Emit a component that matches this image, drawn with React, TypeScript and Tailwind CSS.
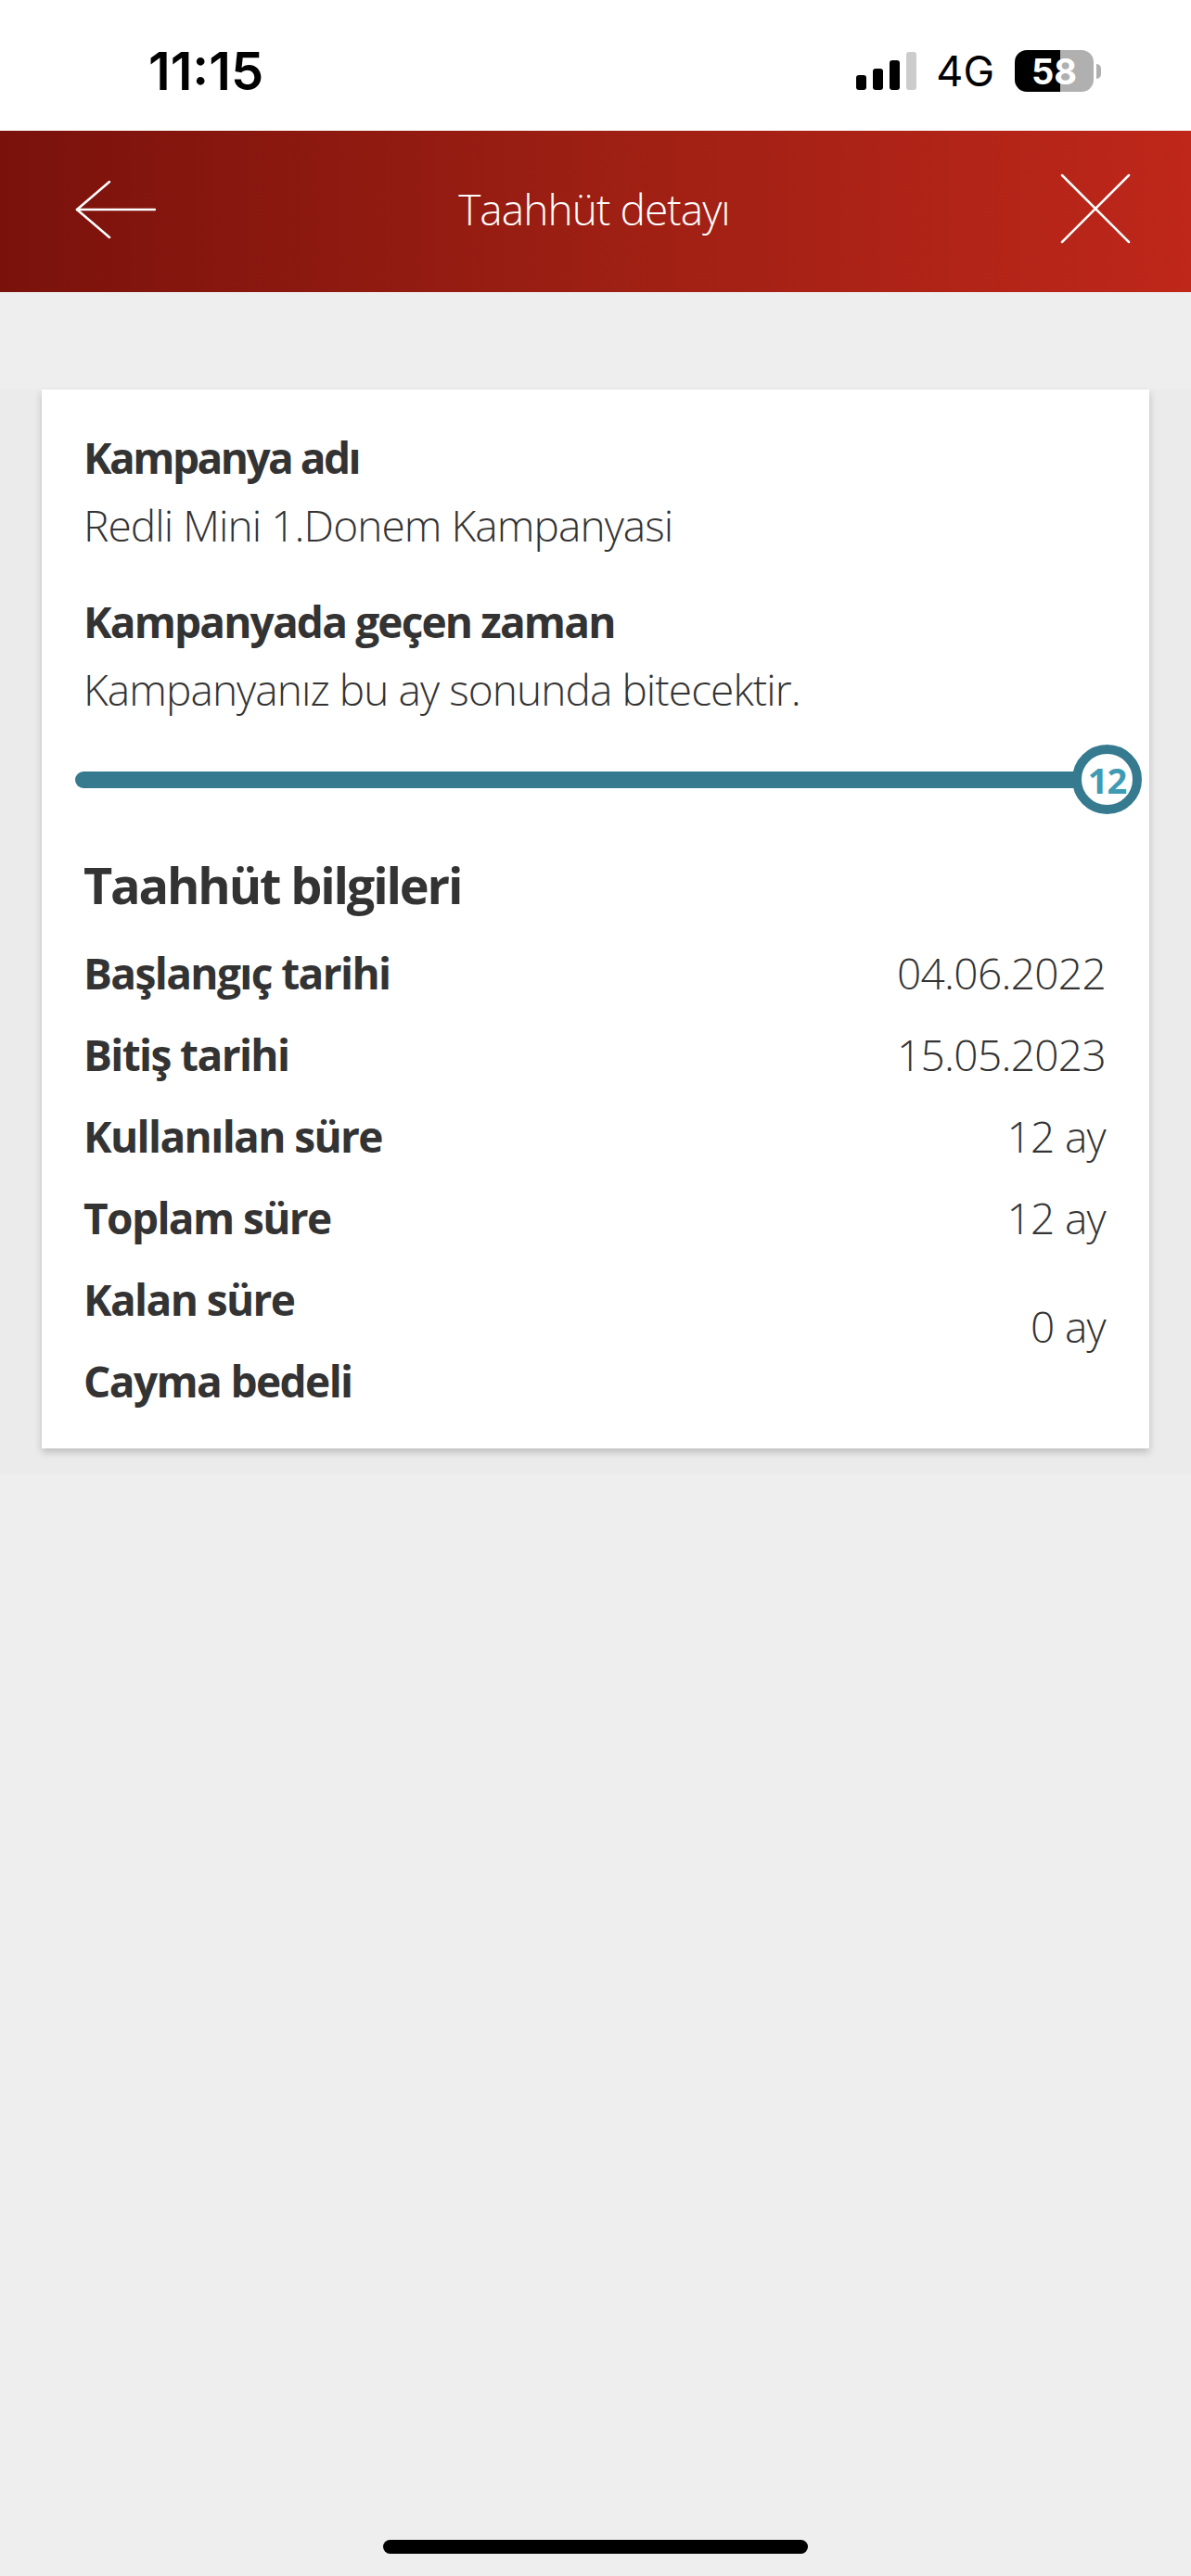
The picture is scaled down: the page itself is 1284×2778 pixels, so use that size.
const rows = [
  { label: 'Başlangıç tarihi', value: '04.06.2022' },
  { label: 'Bitiş tarihi', value: '15.05.2023' },
  { label: 'Kullanılan süre', value: '12 ay' },
  { label: 'Toplam süre', value: '12 ay' },
];

function StatusBar() {
  return (
    <div className="h-[141px] bg-white flex items-center justify-between pl-[160px] pr-[105px] pt-[12px]">
      <span className="font-['Inter',sans-serif] text-[56px] font-semibold text-black leading-none">11:15</span>
      <div className="flex items-center">
        <div className="flex items-end gap-[7px] h-[41px]">
          <span className="w-[11px] h-[16px] rounded-[3px] bg-black" />
          <span className="w-[11px] h-[23px] rounded-[3px] bg-black" />
          <span className="w-[11px] h-[32px] rounded-[3px] bg-black" />
          <span className="w-[11px] h-[41px] rounded-[3px] bg-[#cccccc]" />
        </div>
        <span className="ml-[21px] font-['Inter',sans-serif] text-[45px] font-normal text-black leading-none">4G</span>
        <div className="ml-[22px] relative w-[85px] h-[45px] rounded-[13px] bg-[linear-gradient(90deg,#000_58%,#b0b0b0_58%)] flex items-center justify-center">
          <span className="font-['Inter',sans-serif] text-[38px] font-bold text-white leading-none">58</span>
          <span className="absolute left-[88px] top-[15px] w-[5px] h-[16px] rounded-r-full bg-[#b0b0b0]" />
        </div>
      </div>
    </div>
  );
}

function Header() {
  return (
    <div className="h-[174px] bg-gradient-to-r from-[#7a120c] via-[#9d1f13] to-[#be271a] grid grid-cols-[1fr_auto_1fr] items-center pl-[80px] pr-[65px] text-white">
      <svg width="88" height="64" viewBox="0 0 88 64" fill="none" stroke="currentColor" strokeWidth="2.5" strokeLinecap="round" strokeLinejoin="round" className="mb-[4px]">
        <path d="M87 32H3" />
        <path d="M3 32 38 2" />
        <path d="M3 32 38 62" />
      </svg>
      <span className="mr-[18px] mb-[7px] font-['Open_Sans',sans-serif] text-[46px] font-light leading-none tracking-[-0.02em]">Taahhüt detayı</span>
      <svg width="76" height="76" viewBox="0 0 76 76" fill="none" stroke="currentColor" strokeWidth="2.5" strokeLinecap="round" className="justify-self-end mb-[6px]">
        <path d="M2 2 74 74" />
        <path d="M74 2 2 74" />
      </svg>
    </div>
  );
}

function Progress() {
  return (
    <div className="mt-[33px] ml-[-9px] mr-[-39px] flex items-center">
      <div className="h-[18px] flex-1 bg-[#367a90] rounded-l-full mr-[-1px]" />
      <div className="w-[75px] h-[75px] rounded-full border-[10px] border-[#367a90] bg-white flex items-center justify-center">
        <span className="font-['Open_Sans',sans-serif] text-[38px] font-bold text-[#3f9ab3] leading-none tracking-[-1px]">12</span>
      </div>
    </div>
  );
}

export default function App() {
  return (
    <div className="min-h-[2778px] flex flex-col bg-[#eeeeee] font-['Open_Sans',sans-serif] text-[#333333]">
      <StatusBar />
      <Header />
      <div className="h-[105px]" />
      <div className="bg-[#ebebeb] px-[45px] pb-[28px]">
        <div className="bg-white h-[1142px] pl-[45px] pr-[47px] pt-[46px] shadow-[0_4px_8px_rgba(0,0,0,0.2)]">
          <p className="text-[46px] font-bold tracking-[-0.055em] leading-[54px]">Kampanya adı</p>
          <p className="mt-[19px] text-[46px] font-light tracking-[-0.02em] leading-[54px]">Redli Mini 1.Donem Kampanyasi</p>
          <p className="mt-[50px] text-[46px] font-bold tracking-[-0.04em] leading-[54px]">Kampanyada geçen zaman</p>
          <p className="mt-[19px] text-[46px] font-light tracking-[-0.02em] leading-[54px]">Kampanyanız bu ay sonunda bitecektir.</p>
          <Progress />
          <p className="mt-[44px] text-[54px] font-bold tracking-[-0.04em] leading-[64px]">Taahhüt bilgileri</p>
          <div className="mt-[19px]">
            {rows.map(r => (
              <div key={r.label} className="h-[88px] flex items-center justify-between text-[46px]">
                <span className="font-bold tracking-[-0.035em]">{r.label}</span>
                <span className="font-light tracking-[-0.015em]">{r.value}</span>
              </div>
            ))}
            <div className="flex items-center justify-between text-[46px]">
              <div className="font-bold tracking-[-0.035em]">
                <div className="h-[88px] flex items-center">Kalan süre</div>
                <div className="h-[88px] flex items-center">Cayma bedeli</div>
              </div>
              <span className="font-light tracking-[-0.015em] mb-[30px]">0 ay</span>
            </div>
          </div>
        </div>
      </div>
      <div className="mt-auto flex justify-center pb-[24px]">
        <div className="w-[458px] h-[15px] rounded-full bg-black" />
      </div>
    </div>
  );
}
